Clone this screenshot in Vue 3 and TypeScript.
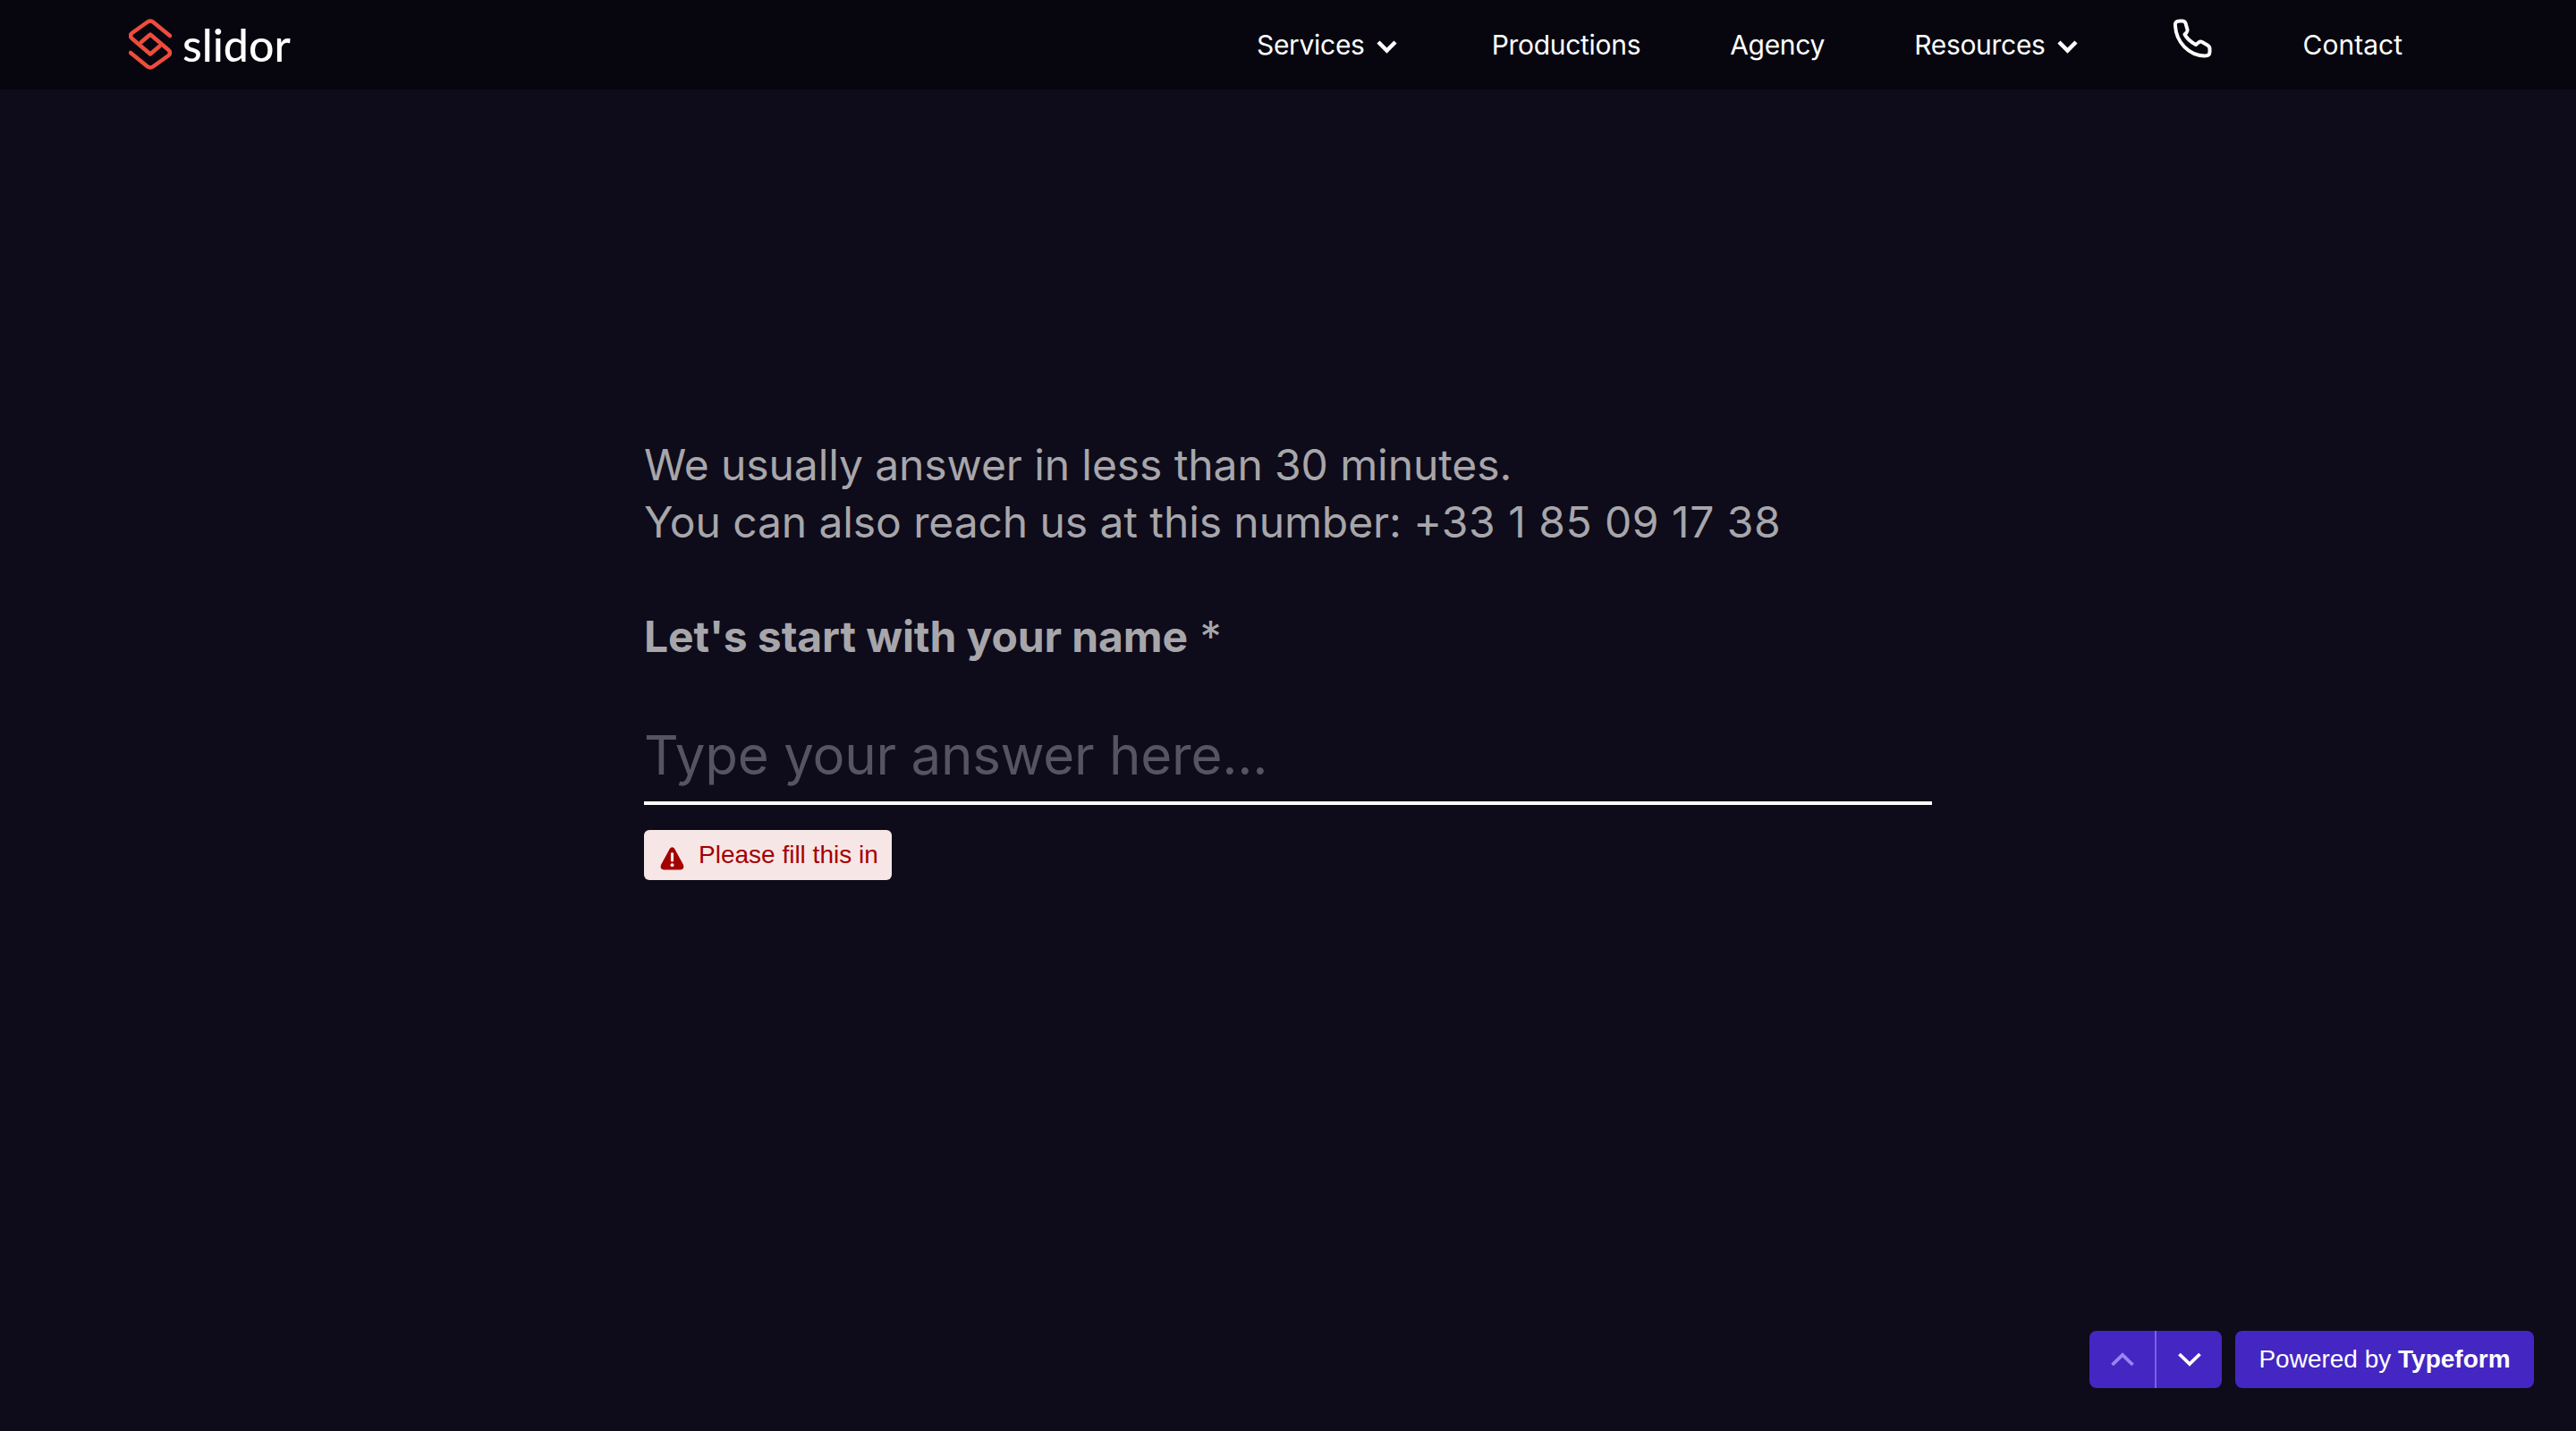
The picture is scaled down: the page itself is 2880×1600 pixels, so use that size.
<script setup lang="ts">
const navItems = [
  { label: 'Services', chevron: true },
  { label: 'Productions', chevron: false },
  { label: 'Agency', chevron: false },
  { label: 'Resources', chevron: true },
]
</script>

<template>
  <div class="page">
    <header class="nav">
      <div class="brand">
        <svg class="logo" viewBox="0 0 48 58" fill="none" stroke="#ee4c3d" stroke-width="4.500" stroke-linecap="round" stroke-linejoin="round">
          <path d="M46 19 L27 3.500 Q24 1.500 21 3.500 L3.500 16 Q0.500 19 3.500 22 L24 39.500 L34 31" />
          <path d="M2 38 L21 53.500 Q24 55.500 27 53.500 L44.500 41 Q47.500 38 44.500 35 L24 17.500 L14 26" />
        </svg>
        <span class="wordmark">slidor</span>
      </div>
      <nav class="links">
        <a v-for="item in navItems" :key="item.label" class="link">
          {{ item.label }}
          <svg v-if="item.chevron" class="chev" viewBox="0 0 23 16" fill="none" stroke="#fff" stroke-width="4.500">
            <path d="M2 3 L11.500 12.500 L21 3" />
          </svg>
        </a>
        <svg class="phone" viewBox="0 0 44 44" fill="none" stroke="#fff" stroke-width="4" stroke-linejoin="round">
          <path d="M3 8 Q2 2.500 8 2.500 L11 2.500 Q13.500 2.500 14.500 5 L16.500 12 Q17 14 15.500 15.500 L13.500 17.500 Q17 24 26 29 L29 26.500 Q31 25 33 26 L39 29.500 Q41.500 31 41.500 33.500 L41.500 37 Q41.500 41.500 36 41.500 C18 41 4 26 3 8 Z" />
        </svg>
        <a class="link contact">Contact</a>
      </nav>
    </header>

    <main class="main">
      <div class="form">
        <p class="intro">We usually answer in less than 30 minutes.<br />You can also reach us at this number: <span class="tel">+33 1 85 09 17 38</span></p>
        <h1 class="question"><strong>Let's start with your name</strong> <span>*</span></h1>
        <div class="field">Type your answer here...</div>
        <div class="error">
          <svg class="warn" viewBox="0 0 24 24"><path fill="#a30000" d="M12 1 Q13.500 1 14.300 2.400 L23 18.500 Q24.500 23 20.500 23.500 L3.500 23.500 Q-0.500 23 1 18.500 L9.700 2.400 Q10.500 1 12 1 Z" /><rect x="10.600" y="6.500" width="2.800" height="9" rx="1" fill="#f7e6e6" /><circle cx="12" cy="18.800" r="1.800" fill="#f7e6e6" /></svg>
          <span>Please fill this in</span>
        </div>
      </div>
    </main>

    <footer class="footer">
      <div class="arrows">
        <button class="arrow">
          <svg viewBox="0 0 26 16" fill="none" stroke="#9a85f0" stroke-width="3.800"><path d="M1.500 14 L13 3 L24.500 14" /></svg>
        </button>
        <button class="arrow">
          <svg viewBox="0 0 26 16" fill="none" stroke="#fff" stroke-width="3.800"><path d="M1.500 2 L13 13 L24.500 2" /></svg>
        </button>
      </div>
      <div class="powered">Powered by <b>Typeform</b></div>
    </footer>
  </div>
</template>

<style>
html, body { margin: 0; background: #0e0b1a; }
</style>

<style scoped>
.page {
  width: 2880px;
  height: 1600px;
  background: #0e0b1a;
  display: flex;
  flex-direction: column;
  font-family: Inter, "Liberation Sans", sans-serif;
  overflow: hidden;
}
.nav {
  height: 100px;
  flex: none;
  background: #07060f;
  display: flex;
  align-items: center;
  justify-content: space-between;
  padding: 0 194px 0 144px;
}
.brand { display: flex; align-items: center; gap: 12px; }
.logo { width: 48px; height: 58px; display: block; }
.wordmark { font-family: Lato, sans-serif; font-size: 50px; font-weight: 500; color: #fff; line-height: 1; }
.links { display: flex; align-items: center; gap: 100px; }
.link { display: flex; align-items: center; gap: 13px; color: #fff; font-size: 30px; line-height: 1; letter-spacing: -0.3px; }
.contact { letter-spacing: 0; }
.chev { width: 23px; height: 16px; margin: 4px 6px 0 0; }
.phone { width: 44px; height: 44px; margin: -14px 2px 0 0; }
.main { flex: 1; padding: 388px 0 0 720px; }
.form { width: 1440px; }
.intro { margin: 0; color: #a7a6aa; font-size: 48px; line-height: 64px; font-weight: 400; letter-spacing: -0.1px; }
.tel { letter-spacing: 0.5px; }
.question { margin: 64px 0 0; color: #a7a6aa; font-size: 48px; line-height: 64px; font-weight: 400; letter-spacing: -0.1px; }
.question strong { font-weight: 700; }
.field { margin-top: 64px; height: 88px; border-bottom: 4px solid #fff; color: #565462; font-size: 60px; line-height: 72px; letter-spacing: -0.23px; }
.error {
  margin-top: 28px;
  display: flex;
  width: fit-content;
  align-items: center;
  gap: 16px;
  height: 56px;
  padding: 0 15px 0 18px;
  background: #f7e6e6;
  border-radius: 6px;
  color: #a30000;
  font-family: "Liberation Sans", sans-serif;
  font-size: 28px;
}
.warn { width: 27px; height: 27px; margin-top: 6px; }
.footer {
  position: absolute;
  left: 2336px;
  top: 1488px;
  display: flex;
  gap: 15px;
}
.arrows { display: flex; background: #4426c2; border-radius: 8px; height: 64px; overflow: hidden; }
.arrow { width: 73px; height: 64px; border: 0; background: transparent; padding: 0; display: flex; align-items: center; justify-content: center; }
.arrow:first-child { width: 75px; border-right: 2px solid #7b62e0; }
.arrow svg { width: 26px; height: 16px; }
.powered {
  height: 64px;
  width: 334px;
  background: #4426c2;
  border-radius: 8px;
  color: #fff;
  font-family: "Liberation Sans", sans-serif;
  font-size: 28px;
  line-height: 64px;
  text-align: center;
}
.powered b { font-weight: 700; }
</style>
